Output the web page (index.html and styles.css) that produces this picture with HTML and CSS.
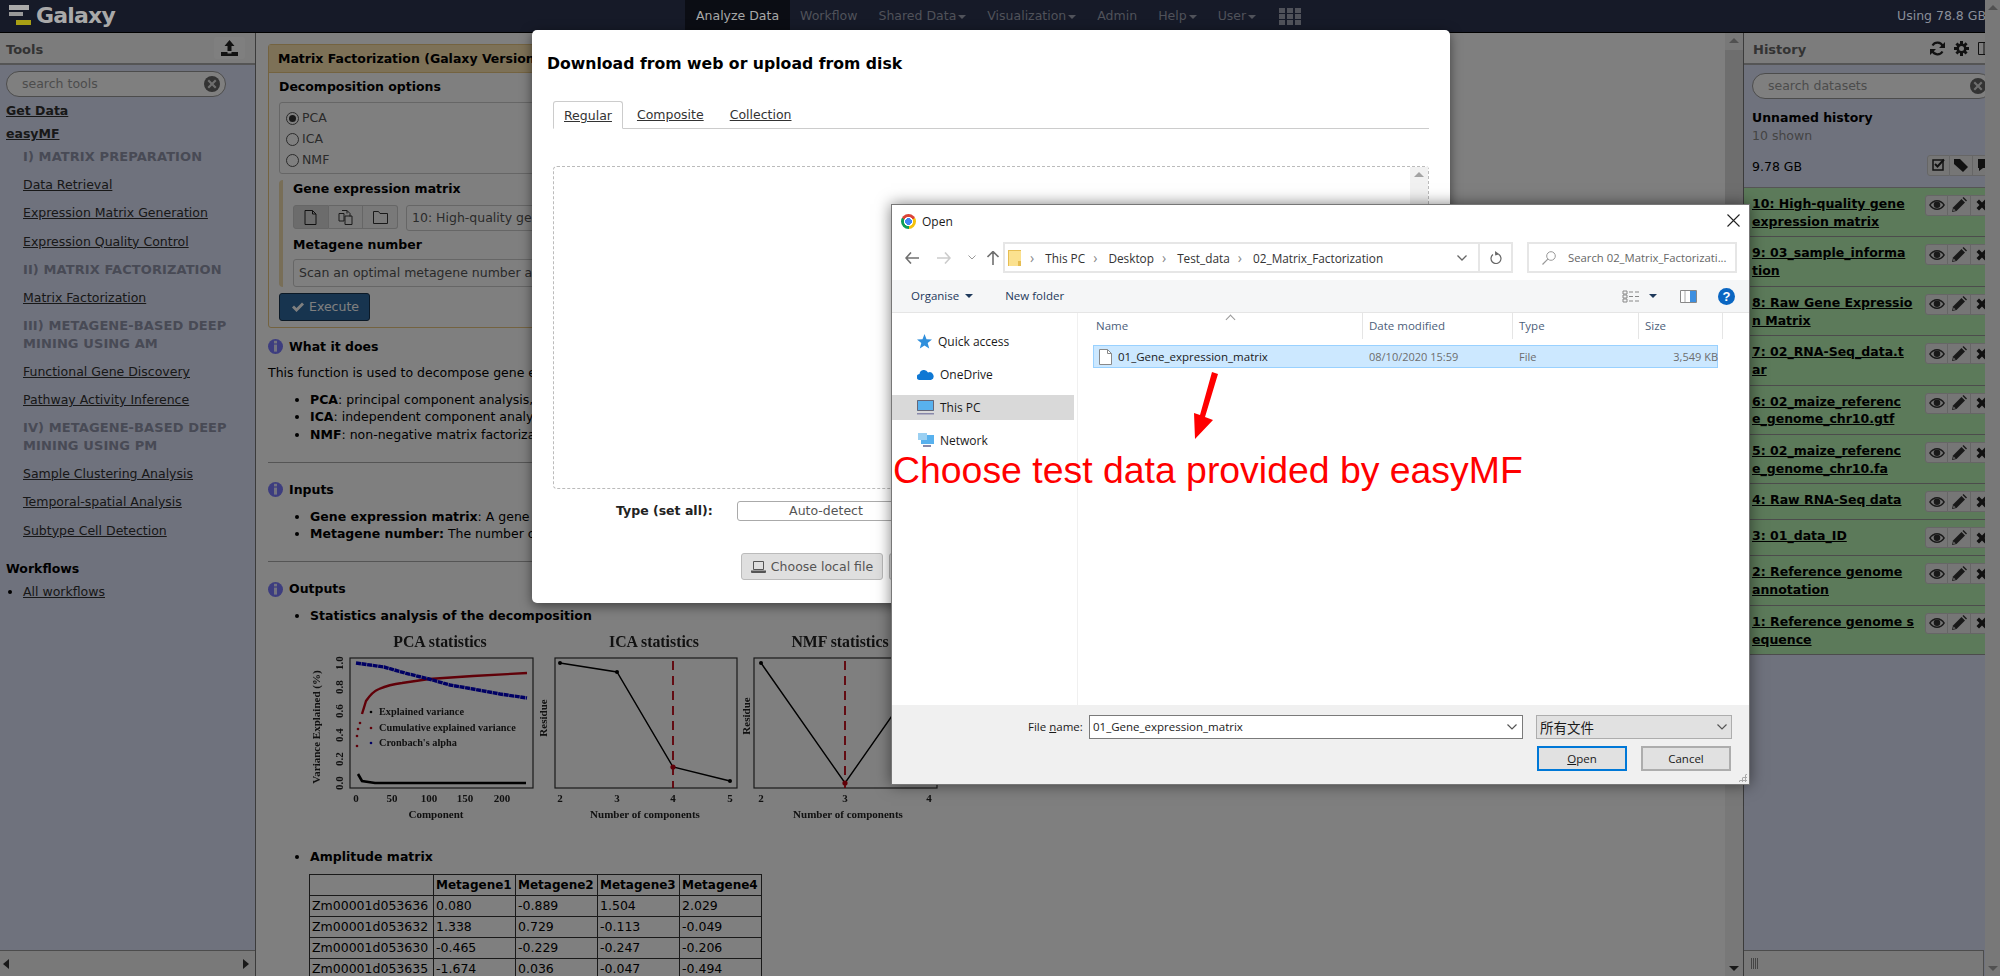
FILE: index.html
```html
<!DOCTYPE html>
<html lang="en">
<head>
    <meta charset="UTF-8">
    <title>Galaxy</title>
    <link rel="stylesheet" href="styles.css">
</head>
<body>
    <svg class="icon-defs" width="0" height="0">
        <symbol id="i-eye" viewBox="0 0 16 16"><path d="M0 8c2-3.500 5-5 8-5s6 1.500 8 5c-2 3.500-5 5-8 5s-6-1.500-8-5z" fill="#333"/><path d="M1.800 8C3.500 5.600 5.700 4.400 8 4.400s4.500 1.200 6.200 3.600c-1.700 2.400-3.900 3.600-6.200 3.600S3.500 10.400 1.800 8z" fill="#eee"/><circle cx="8" cy="7.800" r="3.300" fill="#333"/></symbol>
        <symbol id="i-pencil" viewBox="0 0 16 16"><path d="M1 15l1-4.500L10.500 2l3.500 3.500L5.500 14z" fill="#333"/><path d="M11.500 1l1-1 3.500 3.500-1 1z" fill="#333"/><path d="M2 14l.6-2.600 2 2z" fill="#ddd"/></symbol>
        <symbol id="i-x" viewBox="0 0 16 16"><path d="M2.500 5l2.500-2.500L8 5.500l3-3L13.500 5l-3 3 3 3-2.500 2.500-3-3-3 3L2.500 11l3-3z" fill="#222"/></symbol>
        <symbol id="i-info" viewBox="0 0 15 15"><circle cx="7.500" cy="7.500" r="7.500" fill="#7a7aff"/><rect x="6" y="1.800" width="3" height="2.600" fill="#e6e6ff"/><rect x="6" y="5.600" width="3" height="7" fill="#e6e6ff"/></symbol>
        <symbol id="i-clear" viewBox="0 0 16 16"><circle cx="8" cy="8" r="8" fill="#666"/><path d="M5 3.500L8 6.500l3-3L12.500 5l-3 3 3 3-1.500 1.500-3-3-3 3L3.500 11l3-3-3-3z" fill="#ddd"/></symbol>
    </svg>

    <div class="page">
        <header class="masthead">
            <div class="brand">
                <svg class="brand-logo" width="26" height="22" viewBox="0 0 26 22">
                    <rect x="0" y="0" width="20" height="5" fill="#aaa"/>
                    <rect x="0" y="7" width="14" height="4" fill="#999"/>
                    <rect x="7" y="15" width="15" height="5" fill="#a89f14"/>
                </svg>
                <span class="brand-name">Galaxy</span>
            </div>
            <nav class="top-nav">
                <a class="nav-item active">Analyze Data</a>
                <a class="nav-item">Workflow</a>
                <a class="nav-item caret">Shared Data</a>
                <a class="nav-item caret">Visualization</a>
                <a class="nav-item">Admin</a>
                <a class="nav-item caret">Help</a>
                <a class="nav-item caret">User</a>
                <span class="apps-grid"><i></i><i></i><i></i><i></i><i></i><i></i><i></i><i></i><i></i></span>
            </nav>
            <div class="quota">Using 78.8 GB</div>
        </header>

        <div class="panels">
            <aside class="side-panel tools-panel">
                <div class="panel-header">
                    <span class="panel-title">Tools</span>
                    <span class="upload-btn">
                        <svg width="17" height="16" viewBox="0 0 17 16"><path d="M8.500 0L13.500 6H10.500V11H6.500V6H3.500z" fill="#222"/><path d="M0 12h6.500v1.500h4V12H17v4H0z" fill="#222"/></svg>
                    </span>
                </div>
                <div class="panel-body">
                    <div class="search-box tools-search">
                        <span>search tools</span>
                        <svg class="clear-icon" width="16" height="16"><use href="#i-clear"/></svg>
                    </div>
                    <a class="tool-link top">Get Data</a>
                    <a class="tool-link top last">easyMF</a>
                    <div class="tool-label">I) MATRIX PREPARATION</div>
                    <a class="tool-link">Data Retrieval</a>
                    <a class="tool-link">Expression Matrix Generation</a>
                    <a class="tool-link">Expression Quality Control</a>
                    <div class="tool-label">II) MATRIX FACTORIZATION</div>
                    <a class="tool-link">Matrix Factorization</a>
                    <div class="tool-label">III) METAGENE-BASED DEEP MINING USING AM</div>
                    <a class="tool-link">Functional Gene Discovery</a>
                    <a class="tool-link">Pathway Activity Inference</a>
                    <div class="tool-label">IV) METAGENE-BASED DEEP MINING USING PM</div>
                    <a class="tool-link">Sample Clustering Analysis</a>
                    <a class="tool-link">Temporal-spatial Analysis</a>
                    <a class="tool-link">Subtype Cell Detection</a>
                    <div class="workflow-title">Workflows</div>
                    <ul class="workflow-list">
                        <li><a>All workflows</a></li>
                    </ul>
                </div>
                <div class="panel-footer hscroll">
                    <span class="arrow-left"></span>
                    <span class="arrow-right"></span>
                </div>
            </aside>

            <main class="center">
                <div class="center-content">
                    <section class="tool-card">
                        <div class="tool-card-head">Matrix Factorization (Galaxy Version 1.0.0)</div>
                        <div class="tool-card-body">
                            <div class="field-title">Decomposition options</div>
                            <div class="radio-box">
                                <div class="radio-row"><span class="radio checked"></span>PCA</div>
                                <div class="radio-row"><span class="radio"></span>ICA</div>
                                <div class="radio-row"><span class="radio"></span>NMF</div>
                            </div>
                            <div class="sub-section">
                                <div class="field-title">Gene expression matrix</div>
                                <div class="data-row">
                                    <div class="btn-group">
                                        <span class="seg active">
                                            <svg width="13" height="15" viewBox="0 0 13 15"><path d="M1 .500h7.500L12 4v10.500H1zM8.500 .500V4H12" fill="none" stroke="#222"/></svg>
                                        </span>
                                        <span class="seg">
                                            <svg width="15" height="15" viewBox="0 0 15 15"><path d="M1 3.500h5V11H1zM4 .500h5v3M9 .500l3 3v3M7 6h7v8.500H7z" fill="none" stroke="#333"/></svg>
                                        </span>
                                        <span class="seg">
                                            <svg width="15" height="13" viewBox="0 0 15 13"><path d="M.500 .500h5l1.500 2h7.500v10H.500z" fill="none" stroke="#333"/></svg>
                                        </span>
                                    </div>
                                    <div class="fake-select">10: High-quality gene expression matrix</div>
                                </div>
                                <div class="field-title second">Metagene number</div>
                                <div class="fake-input">Scan an optimal metagene number automatically</div>
                            </div>
                            <button class="execute-btn">
                                <svg width="12" height="10" viewBox="0 0 12 10"><path d="M0 5.500L2 3.500l2.500 2.500L10 .500l2 2L4.500 10z" fill="#fff"/></svg>
                                Execute
                            </button>
                        </div>
                    </section>

                    <h4 class="help-title first"><svg width="15" height="15"><use href="#i-info"/></svg>What it does</h4>
                    <p class="help-text">This function is used to decompose gene expression</p>
                    <ul class="help-list">
                        <li><b>PCA</b>: principal component analysis,</li>
                        <li><b>ICA</b>: independent component analysis</li>
                        <li><b>NMF</b>: non-negative matrix factorization</li>
                    </ul>
                    <hr class="help-rule">
                    <h4 class="help-title"><svg width="15" height="15"><use href="#i-info"/></svg>Inputs</h4>
                    <ul class="help-list">
                        <li><b>Gene expression matrix</b>: A gene</li>
                        <li><b>Metagene number:</b> The number of</li>
                    </ul>
                    <hr class="help-rule">
                    <h4 class="help-title"><svg width="15" height="15"><use href="#i-info"/></svg>Outputs</h4>
                    <ul class="help-list">
                        <li><b>Statistics analysis of the decomposition</b></li>
                    </ul>

                    <svg class="stats-chart" width="650" height="190" viewBox="300 632 650 190">
                        <g class="chart-title">
                            <text x="440" y="646" text-anchor="middle">PCA statistics</text>
                            <text x="654" y="646" text-anchor="middle">ICA statistics</text>
                            <text x="840" y="646" text-anchor="middle">NMF statistics</text>
                        </g>
                        <g fill="none" stroke="#333" stroke-width="1.200">
                            <rect x="350" y="657" width="183" height="130"/>
                            <rect x="555" y="657" width="182" height="130"/>
                            <rect x="754" y="657" width="183" height="130"/>
                        </g>
                        <!-- PCA curves -->
                        <path d="M358 773L362 780L375 782H526" fill="none" stroke="#000" stroke-width="2.600"/>
                        <path d="M362 713L366 700C370 694 374 690 379 688C386 685 394 683 402 682L429 678L473 675L527 672" fill="none" stroke="#c00010" stroke-width="2.400"/>
                        <g fill="#c00010"><circle cx="357" cy="745" r="1.300"/><circle cx="357" cy="735" r="1.300"/><circle cx="358" cy="728" r="1.300"/><circle cx="360" cy="722" r="1.300"/><circle cx="371" cy="727" r="1.300"/></g>
                        <path d="M356 662L384 666L405 672L429 678L450 684L473 688L500 693L527 697" fill="none" stroke="#0000c8" stroke-width="3.400" stroke-dasharray="5 .6"/>
                        <circle cx="371" cy="711" r="1.300" fill="#000"/>
                        <circle cx="371" cy="742" r="1.300" fill="#0000c8"/>
                        <g class="chart-legend">
                            <text x="379" y="714">Explained variance</text>
                            <text x="379" y="730">Cumulative explained variance</text>
                            <text x="379" y="745">Cronbach's alpha</text>
                        </g>
                        <g class="chart-axis">
                            <text transform="rotate(-90 343 662)" x="343" y="662" text-anchor="middle">1.0</text>
                            <text transform="rotate(-90 343 686)" x="343" y="686" text-anchor="middle">0.8</text>
                            <text transform="rotate(-90 343 710)" x="343" y="710" text-anchor="middle">0.6</text>
                            <text transform="rotate(-90 343 734)" x="343" y="734" text-anchor="middle">0.4</text>
                            <text transform="rotate(-90 343 758)" x="343" y="758" text-anchor="middle">0.2</text>
                            <text transform="rotate(-90 343 782)" x="343" y="782" text-anchor="middle">0.0</text>
                            <text x="356" y="801" text-anchor="middle">0</text>
                            <text x="392" y="801" text-anchor="middle">50</text>
                            <text x="429" y="801" text-anchor="middle">100</text>
                            <text x="465" y="801" text-anchor="middle">150</text>
                            <text x="502" y="801" text-anchor="middle">200</text>
                            <text x="436" y="817" text-anchor="middle">Component</text>
                            <text transform="rotate(-90 320 726)" x="320" y="726" text-anchor="middle">Variance Explained (%)</text>

                            <text x="560" y="801" text-anchor="middle">2</text>
                            <text x="617" y="801" text-anchor="middle">3</text>
                            <text x="673" y="801" text-anchor="middle">4</text>
                            <text x="730" y="801" text-anchor="middle">5</text>
                            <text x="645" y="817" text-anchor="middle">Number of components</text>
                            <text transform="rotate(-90 547 717)" x="547" y="717" text-anchor="middle">Residue</text>

                            <text x="761" y="801" text-anchor="middle">2</text>
                            <text x="845" y="801" text-anchor="middle">3</text>
                            <text x="929" y="801" text-anchor="middle">4</text>
                            <text x="848" y="817" text-anchor="middle">Number of components</text>
                            <text transform="rotate(-90 750 715)" x="750" y="715" text-anchor="middle">Residue</text>
                        </g>
                        <!-- ICA -->
                        <path d="M673 660V787" stroke="#c00010" stroke-width="1.800" stroke-dasharray="9 6"/>
                        <path d="M560 662L617 671L673 766L730 780" fill="none" stroke="#000" stroke-width="1.400"/>
                        <circle cx="560" cy="662" r="2" fill="#000"/><circle cx="617" cy="671" r="2" fill="#000"/><circle cx="673" cy="766" r="2.600" fill="#c00010"/><circle cx="730" cy="780" r="2" fill="#000"/>
                        <!-- NMF -->
                        <path d="M845 660V787" stroke="#c00010" stroke-width="1.800" stroke-dasharray="9 6"/>
                        <path d="M761 662L845 782L929 662" fill="none" stroke="#000" stroke-width="1.400"/>
                        <circle cx="761" cy="662" r="2" fill="#000"/><circle cx="845" cy="782" r="2.600" fill="#c00010"/>
                    </svg>

                    <ul class="help-list amplitude">
                        <li><b>Amplitude matrix</b></li>
                    </ul>
                    <table class="matrix">
                        <tr><th></th><th>Metagene1</th><th>Metagene2</th><th>Metagene3</th><th>Metagene4</th></tr>
                        <tr><td>Zm00001d053636</td><td>0.080</td><td>-0.889</td><td>1.504</td><td>2.029</td></tr>
                        <tr><td>Zm00001d053632</td><td>1.338</td><td>0.729</td><td>-0.113</td><td>-0.049</td></tr>
                        <tr><td>Zm00001d053630</td><td>-0.465</td><td>-0.229</td><td>-0.247</td><td>-0.206</td></tr>
                        <tr><td>Zm00001d053635</td><td>-1.674</td><td>0.036</td><td>-0.047</td><td>-0.494</td></tr>
                    </table>
                </div>
                <div class="vscroll center-scroll">
                    <span class="arrow-up"></span>
                    <span class="thumb"></span>
                    <span class="arrow-down"></span>
                </div>
            </main>

            <aside class="side-panel history-panel">
                <div class="panel-header">
                    <span class="panel-title">History</span>
                    <span class="history-tools">
                        <svg width="15" height="15" viewBox="0 0 15 15"><path d="M12.800 5.200A5.800 5.800 0 0 0 2.500 4.500M2.200 9.800A5.800 5.800 0 0 0 12.500 10.500" fill="none" stroke="#222" stroke-width="2.200"/><path d="M15 1v6H9zM0 14V8h6z" fill="#222"/></svg>
                        <svg width="15" height="15" viewBox="0 0 15 15"><circle cx="7.500" cy="7.500" r="3.800" fill="none" stroke="#222" stroke-width="2.600"/><path d="M6 0h3v3H6zM6 12h3v3H6zM0 6h3v3H0zM12 6h3v3h-3zM1.400 3.500L3.500 1.400l2 2-2.100 2.100zM9.500 11.600l2.100-2.100 2 2-2.100 2.100zM1.400 11.500l2.100-2.100 2 2-2.100 2.100zM9.500 3.400l2.100-2.100 2 2-2.100 2.100z" fill="#222"/></svg>
                        <svg width="15" height="15" viewBox="0 0 15 15"><path d="M.500 1.500h14v12H.500zM6 1.500v12" fill="none" stroke="#222"/></svg>
                    </span>
                </div>
                <div class="panel-body">
                    <div class="search-box history-search">
                        <span>search datasets</span>
                        <svg class="clear-icon" width="16" height="16"><use href="#i-clear"/></svg>
                    </div>
                    <div class="history-name">Unnamed history</div>
                    <div class="history-shown">10 shown</div>
                    <div class="history-size">
                        <span class="size-value-text">9.78 GB</span>
                        <span class="size-actions">
                            <span class="mini-btn"><svg width="14" height="14" viewBox="0 0 14 14"><path d="M1 2h10v10H1z" fill="none" stroke="#222" stroke-width="1.500"/><path d="M3 6l2.500 2.500L12 1.500" fill="none" stroke="#222" stroke-width="2"/></svg></span>
                            <span class="mini-btn"><svg width="15" height="15" viewBox="0 0 15 15"><path d="M0 1h6l8 8-5 5-9-8z" fill="#222"/></svg></span>
                            <span class="mini-btn"><svg width="15" height="14" viewBox="0 0 15 14"><path d="M1 1h13v9H6l-4 3v-3H1z" fill="#222"/></svg></span>
                        </span>
                    </div>
                    <div class="dataset-list">
                        <div class="dataset"><a class="dataset-name">10: High-quality gene<br>expression matrix</a><span class="dataset-actions"><span class="mini-btn"><svg width="16" height="16"><use href="#i-eye"/></svg></span><span class="mini-btn"><svg width="16" height="16"><use href="#i-pencil"/></svg></span><span class="mini-btn"><svg width="16" height="16"><use href="#i-x"/></svg></span></span></div>
                        <div class="dataset"><a class="dataset-name">9: 03_sample_informa<br>tion</a><span class="dataset-actions"><span class="mini-btn"><svg width="16" height="16"><use href="#i-eye"/></svg></span><span class="mini-btn"><svg width="16" height="16"><use href="#i-pencil"/></svg></span><span class="mini-btn"><svg width="16" height="16"><use href="#i-x"/></svg></span></span></div>
                        <div class="dataset"><a class="dataset-name">8: Raw Gene Expressio<br>n Matrix</a><span class="dataset-actions"><span class="mini-btn"><svg width="16" height="16"><use href="#i-eye"/></svg></span><span class="mini-btn"><svg width="16" height="16"><use href="#i-pencil"/></svg></span><span class="mini-btn"><svg width="16" height="16"><use href="#i-x"/></svg></span></span></div>
                        <div class="dataset"><a class="dataset-name">7: 02_RNA-Seq_data.t<br>ar</a><span class="dataset-actions"><span class="mini-btn"><svg width="16" height="16"><use href="#i-eye"/></svg></span><span class="mini-btn"><svg width="16" height="16"><use href="#i-pencil"/></svg></span><span class="mini-btn"><svg width="16" height="16"><use href="#i-x"/></svg></span></span></div>
                        <div class="dataset"><a class="dataset-name">6: 02_maize_referenc<br>e_genome_chr10.gtf</a><span class="dataset-actions"><span class="mini-btn"><svg width="16" height="16"><use href="#i-eye"/></svg></span><span class="mini-btn"><svg width="16" height="16"><use href="#i-pencil"/></svg></span><span class="mini-btn"><svg width="16" height="16"><use href="#i-x"/></svg></span></span></div>
                        <div class="dataset"><a class="dataset-name">5: 02_maize_referenc<br>e_genome_chr10.fa</a><span class="dataset-actions"><span class="mini-btn"><svg width="16" height="16"><use href="#i-eye"/></svg></span><span class="mini-btn"><svg width="16" height="16"><use href="#i-pencil"/></svg></span><span class="mini-btn"><svg width="16" height="16"><use href="#i-x"/></svg></span></span></div>
                        <div class="dataset"><a class="dataset-name">4: Raw RNA-Seq data</a><span class="dataset-actions"><span class="mini-btn"><svg width="16" height="16"><use href="#i-eye"/></svg></span><span class="mini-btn"><svg width="16" height="16"><use href="#i-pencil"/></svg></span><span class="mini-btn"><svg width="16" height="16"><use href="#i-x"/></svg></span></span></div>
                        <div class="dataset"><a class="dataset-name">3: 01_data_ID</a><span class="dataset-actions"><span class="mini-btn"><svg width="16" height="16"><use href="#i-eye"/></svg></span><span class="mini-btn"><svg width="16" height="16"><use href="#i-pencil"/></svg></span><span class="mini-btn"><svg width="16" height="16"><use href="#i-x"/></svg></span></span></div>
                        <div class="dataset"><a class="dataset-name">2: Reference genome<br>annotation</a><span class="dataset-actions"><span class="mini-btn"><svg width="16" height="16"><use href="#i-eye"/></svg></span><span class="mini-btn"><svg width="16" height="16"><use href="#i-pencil"/></svg></span><span class="mini-btn"><svg width="16" height="16"><use href="#i-x"/></svg></span></span></div>
                        <div class="dataset"><a class="dataset-name">1: Reference genome s<br>equence</a><span class="dataset-actions"><span class="mini-btn"><svg width="16" height="16"><use href="#i-eye"/></svg></span><span class="mini-btn"><svg width="16" height="16"><use href="#i-pencil"/></svg></span><span class="mini-btn"><svg width="16" height="16"><use href="#i-x"/></svg></span></span></div>
                    </div>
                </div>
                <div class="panel-footer grip-footer">
                    <span class="grip"></span>
                </div>
            </aside>
        </div>
    </div>

    <div class="vscroll page-scroll">
        <span class="arrow-up"></span>
        <span class="arrow-down"></span>
    </div>

    <div class="backdrop"></div>

    <!-- upload modal -->
    <div class="upload-modal">
        <div class="upload-title">Download from web or upload from disk</div>
        <div class="upload-tabs">
            <a class="upload-tab active">Regular</a>
            <a class="upload-tab">Composite</a>
            <a class="upload-tab">Collection</a>
        </div>
        <div class="drop-zone">
            <div class="vscroll drop-scroll">
                <span class="arrow-up"></span>
            </div>
        </div>
        <div class="type-row">
            <span class="type-label">Type (set all):</span>
            <span class="type-select">Auto-detect</span>
        </div>
        <div class="upload-buttons">
            <button class="upload-btn-local">
                <svg width="15" height="12" viewBox="0 0 15 12"><path d="M2.500 .500h10v8h-10z" fill="none" stroke="#555"/><path d="M0 9.500h15V11a1 1 0 0 1-1 1H1a1 1 0 0 1-1-1z" fill="#555"/></svg>
                Choose local file
            </button>
            <button class="upload-btn-local"></button>
        </div>
    </div>

    <!-- windows file dialog -->
    <div class="open-dialog">
        <div class="od-title">
            <span class="chrome-icon"></span>
            <span>Open</span>
            <svg class="od-close" width="13" height="13" viewBox="0 0 13 13"><path d="M.500 .500l12 12M12.500 .500l-12 12" stroke="#222" stroke-width="1.100"/></svg>
        </div>
        <div class="od-address-row">
            <div class="od-nav-arrows">
                <svg width="14" height="12" viewBox="0 0 14 12"><path d="M6 .500L1 6l5 5.500M1 6h13" fill="none" stroke="#707070" stroke-width="1.600"/></svg>
                <svg width="14" height="12" viewBox="0 0 14 12"><path d="M8 .500L13 6l-5 5.500M13 6H0" fill="none" stroke="#ccc" stroke-width="1.600"/></svg>
                <svg width="8" height="5" viewBox="0 0 8 5"><path d="M.500 .500L4 4l3.500-3.500" fill="none" stroke="#999"/></svg>
                <svg width="12" height="14" viewBox="0 0 12 14"><path d="M.500 6L6 .500 11.500 6M6 1v13" fill="none" stroke="#707070" stroke-width="1.600"/></svg>
            </div>
            <div class="od-address">
                <svg class="folder-icon" width="13" height="16" viewBox="0 0 13 16"><path d="M0 0h13v16H0z" fill="#fbe18f"/><path d="M0 0h13v1H0zM0 0h1v16H0zM10 11h3v5h-3z" fill="#e6bd52"/></svg>
                <span class="crumb-sep">›</span><span>This PC</span>
                <span class="crumb-sep">›</span><span>Desktop</span>
                <span class="crumb-sep">›</span><span>Test_data</span>
                <span class="crumb-sep">›</span><span>02_Matrix_Factorization</span>
                <svg class="address-chevron" width="10" height="6" viewBox="0 0 10 6"><path d="M.500 .500L5 5 9.500 .500" fill="none" stroke="#666" stroke-width="1.300"/></svg>
                <span class="address-refresh">
                    <svg width="12" height="13" viewBox="0 0 12 13"><path d="M8.500 3.200A5 5 0 1 1 3 3.500" fill="none" stroke="#666" stroke-width="1.200"/><path d="M5 0l.2 4.600L9.500 3.200z" fill="#666"/></svg>
                </span>
            </div>
            <div class="od-search">
                <svg width="14" height="14" viewBox="0 0 14 14"><circle cx="9" cy="5" r="4.300" fill="none" stroke="#999"/><path d="M5.800 8.200L.500 13.500" stroke="#999" stroke-width="1.200"/></svg>
                <span>Search 02_Matrix_Factorizati...</span>
            </div>
        </div>
        <div class="od-toolbar">
            <span class="od-tool caret-dark">Organise</span>
            <span class="od-tool">New folder</span>
            <span class="od-tool-right">
                <svg width="18" height="13" viewBox="0 0 18 13"><path d="M1 1h4v3H1zM1 5h4v3H1zM1 9h4v3H1z" fill="none" stroke="#888"/><path d="M7 2h4M13 2h4M7 6.500h4M13 6.500h4M7 11h4M13 11h4" stroke="#888"/></svg>
                <span class="view-caret"></span>
                <svg class="pane-icon" width="17" height="13" viewBox="0 0 17 13"><path d="M.500 .500h16v12H.500z" fill="#fff" stroke="#888"/><path d="M10 1h6v11h-6z" fill="#3d8fe0"/><path d="M5 1v11" stroke="#aaa"/></svg>
                <svg class="help-icon" width="17" height="17" viewBox="0 0 17 17"><circle cx="8.500" cy="8.500" r="8.500" fill="#0a66c2"/><text class="help-q" x="8.500" y="13" text-anchor="middle">?</text></svg>
            </span>
        </div>
        <div class="od-main">
            <div class="od-nav">
                <div class="od-nav-item">
                    <svg width="15" height="15" viewBox="0 0 15 15"><path d="M7.500 0l2 5.200 5.500.3-4.300 3.500 1.500 5.500-4.700-3-4.700 3 1.500-5.500L0 5.500l5.500-.3z" fill="#2f8fdc"/></svg>
                    Quick access
                </div>
                <div class="od-nav-item">
                    <svg width="17" height="11" viewBox="0 0 17 11"><path d="M3 11a3 3 0 0 1-.5-6A4.500 4.500 0 0 1 11 3.500 3.800 3.800 0 0 1 14 11z" fill="#0f78d4"/></svg>
                    OneDrive
                </div>
                <div class="od-nav-item selected">
                    <svg width="17" height="15" viewBox="0 0 17 15"><path d="M0 0h17v11H0z" fill="#58b1ee"/><path d="M.500 .500h16v10H.500z" fill="none" stroke="#667"/><path d="M0 13h17v1.500H0z" fill="#88a"/></svg>
                    This PC
                </div>
                <div class="od-nav-item">
                    <svg width="17" height="15" viewBox="0 0 17 15"><path d="M4 2h13v9H4z" fill="#58b1ee"/><path d="M1 0h9v7H1z" fill="#9bd0f2"/><path d="M6 12h8v2H6z" fill="#88a"/></svg>
                    Network
                </div>
            </div>
            <div class="od-list">
                <div class="od-list-head">
                    <span class="sort-mark"></span>
                    <span class="col col-name">Name</span>
                    <span class="col col-date">Date modified</span>
                    <span class="col col-type">Type</span>
                    <span class="col col-size">Size</span>
                </div>
                <div class="od-file">
                    <span class="col col-name file-name">
                        <svg width="13" height="16" viewBox="0 0 13 16"><path d="M.500 .500h8l4 4v11H.500z" fill="#fff" stroke="#888"/><path d="M8.500 .500v4h4" fill="none" stroke="#888"/></svg>
                        01_Gene_expression_matrix
                    </span>
                    <span class="col col-date">08/10/2020 15:59</span>
                    <span class="col col-type">File</span>
                    <span class="col col-size size-value">3,549 KB</span>
                </div>
            </div>
        </div>
        <div class="od-bottom">
            <div class="od-file-row">
                <span class="od-label">File <u>n</u>ame:</span>
                <div class="od-input">
                    <span>01_Gene_expression_matrix</span>
                    <svg width="10" height="6" viewBox="0 0 10 6"><path d="M.500 .500L5 5 9.500 .500" fill="none" stroke="#555" stroke-width="1.200"/></svg>
                </div>
                <div class="od-filter">
                    <span>所有文件</span>
                    <svg width="10" height="6" viewBox="0 0 10 6"><path d="M.500 .500L5 5 9.500 .500" fill="none" stroke="#555" stroke-width="1.200"/></svg>
                </div>
            </div>
            <div class="od-button-row">
                <button class="od-btn primary"><u>O</u>pen</button>
                <button class="od-btn">Cancel</button>
            </div>
            <span class="resize-grip"></span>
        </div>
        <!-- annotation added on the screenshot -->
        <svg class="red-arrow" width="24" height="68" viewBox="0 0 24 68"><path d="M20 0L26 2 13 45 21 48 3 67 2 41 8 43z" fill="#ff0000"/></svg>
        <div class="red-note">Choose test data provided by easyMF</div>
    </div>
</body>
</html>
```
FILE: styles.css
```css
* {
    margin: 0;
    padding: 0;
    box-sizing: border-box;
}

html, body {
    height: 976px;
    overflow: hidden;
}

body {
    display: flex;
    font-family: 'DejaVu Sans', Verdana, sans-serif;
    font-size: 12.500px;
    line-height: 17.6px;
    color: #000;
    background: #fff;
    position: relative;
}

.icon-defs {
    position: absolute;
}

.page {
    width: 1985px;
    height: 976px;
    display: flex;
    flex-direction: column;
}

/* masthead, above the backdrop because it keeps its brightness */
.masthead {
    position: relative;
    z-index: 2;
    height: 33px;
    flex: none;
    background: #161a28;
    border-bottom: 1px solid #000;
    display: flex;
    align-items: center;
    overflow: hidden;
}

.brand {
    width: 685px;
    display: flex;
    align-items: center;
    flex: none;
    padding-left: 9px;
}

.brand-logo {
    margin-right: 1px;
}

.brand-name {
    font-size: 22px;
    font-weight: bold;
    color: #a9a9a9;
    letter-spacing: -.8px;
}

.top-nav {
    display: flex;
    align-items: center;
    height: 32px;
    flex: 1;
}

.nav-item {
    color: #50525a;
    margin-right: 21px;
    line-height: 32px;
}

.nav-item.active {
    background: #0b0d14;
    color: #a8a8a8;
    padding: 0 11px;
    margin-right: 10px;
}

.nav-item.caret::after {
    content: "";
    display: inline-block;
    margin-left: 2px;
    vertical-align: 1px;
    border-left: 4px solid transparent;
    border-right: 4px solid transparent;
    border-top: 4px solid #50525a;
}

.apps-grid {
    display: grid;
    grid-template-columns: repeat(3, 6px);
    grid-auto-rows: 5px;
    gap: 1px 2px;
    margin-left: 2px;
}

.apps-grid i {
    background: #50525a;
}

.quota {
    color: #8a8f9a;
    white-space: nowrap;
    width: 88px;
    flex: none;
}

.panels {
    flex: 1;
    display: flex;
    min-height: 0;
}

.side-panel {
    background: #dfe5fb;
    display: flex;
    flex-direction: column;
    flex: none;
    overflow: hidden;
}

.tools-panel {
    width: 256px;
    border-right: 1px solid #777;
}

.history-panel {
    width: 242px;
    border-left: 1px solid #777;
}

.panel-header {
    height: 32px;
    flex: none;
    background: #f8f8f8;
    border-bottom: 2px solid #aaa;
    display: flex;
    align-items: center;
    justify-content: space-between;
}

.panel-title {
    color: #666;
    font-size: 13px;
    font-weight: bold;
    padding: 3px 0 0 6px;
}

.history-panel .panel-title {
    padding-left: 9px;
}

.upload-btn {
    width: 31px;
    height: 22px;
    margin-right: 10px;
    display: flex;
    align-items: center;
    justify-content: center;
    background: #fff;
    border-radius: 3px;
}

.panel-body {
    flex: 1;
    min-height: 0;
}

.panel-footer {
    height: 26px;
    flex: none;
    background: #f2f2f2;
    border-top: 1px solid #999;
}

.hscroll {
    display: flex;
    align-items: center;
    justify-content: space-between;
    padding: 0 6px 0 3px;
}

.arrow-left {
    border-top: 5px solid transparent;
    border-bottom: 5px solid transparent;
    border-right: 6px solid #333;
}

.arrow-right {
    border-top: 5px solid transparent;
    border-bottom: 5px solid transparent;
    border-left: 6px solid #333;
}

.search-box {
    height: 26px;
    border: 1px solid #999;
    border-radius: 13px;
    background: #fff;
    color: #999;
    display: flex;
    align-items: center;
    justify-content: space-between;
    padding: 0 5px 0 15px;
}

.tools-search {
    width: 220px;
    margin: 6px 0 5px 6px;
}

.history-search {
    width: 240px;
    margin: 8px 0 10px 8px;
    flex: none;
}

.tool-link {
    display: block;
    color: #303030;
    text-decoration: underline;
    padding: 5.300px 10px 5.300px 23px;
}

.tool-link.top {
    font-weight: bold;
    padding: 0 0 5.600px 6px;
}

.tool-link.top.last {
    padding-bottom: 0;
}

.tool-label {
    color: #9094aa;
    font-size: 13px;
    letter-spacing: .1px;
    font-weight: bold;
    padding: 5.300px 0 5.300px 23px;
}

.workflow-title {
    font-weight: bold;
    padding-left: 6px;
    margin-top: 16px;
}

.workflow-list {
    margin-top: 5px;
    padding-left: 23px;
}

.workflow-list a {
    color: #303030;
    text-decoration: underline;
}

/* center column */
.center {
    flex: 1;
    min-width: 0;
    display: flex;
    background: #fff;
}

.center-content {
    flex: 1;
    min-width: 0;
    padding: 11px 9px 0 12px;
    overflow: hidden;
}

.vscroll {
    background: #f1f1f1;
    position: relative;
    display: flex;
    flex-direction: column;
    align-items: center;
    justify-content: space-between;
}

.center-scroll {
    width: 18px;
    flex: none;
}

.thumb {
    position: absolute;
    top: 17px;
    left: 0;
    right: 0;
    height: 640px;
    background: #dcdcdc;
}

.arrow-up {
    margin-top: 5px;
    border-left: 5px solid transparent;
    border-right: 5px solid transparent;
    border-bottom: 5px solid #a3a3a3;
}

.arrow-down {
    margin-bottom: 5px;
    border-left: 5px solid transparent;
    border-right: 5px solid transparent;
    border-top: 5px solid #333;
}

.page-scroll {
    width: 15px;
    height: 976px;
    flex: none;
}

.page-scroll .arrow-down {
    border-top-color: #a3a3a3;
}

.tool-card {
    width: 1100px;
    border: 1px solid #e8c680;
    border-radius: 3px;
}

.tool-card-head {
    height: 28px;
    background: #fbe2ae;
    border-bottom: 1px solid #e8c680;
    font-weight: bold;
    line-height: 27px;
    padding-left: 9px;
}

.tool-card-body {
    padding: 5px 10px 6px 10px;
}

.field-title {
    font-weight: bold;
}

.field-title.second {
    margin-top: 5px;
    margin-bottom: 5px;
}

.radio-box {
    height: 72px;
    margin-top: 6px;
    border: 1px solid #ccc;
    border-radius: 3px;
    padding: 5px 0 0 6px;
}

.radio-row {
    height: 21px;
    display: flex;
    align-items: center;
    color: #555;
}

.radio {
    width: 13px;
    height: 13px;
    border: 1px solid #555;
    border-radius: 50%;
    margin-right: 3px;
    background: #fff;
    position: relative;
}

.radio.checked::after {
    content: "";
    position: absolute;
    left: 2px;
    top: 2px;
    width: 7px;
    height: 7px;
    border-radius: 50%;
    background: #333;
}

.sub-section {
    margin-top: 6px;
    border-left: 4px solid #f0dcae;
    border-radius: 4px 0 0 4px;
    padding: 0 0 0 10px;
    height: 107px;
}

.data-row {
    display: flex;
    gap: 8px;
    margin-top: 8px;
    height: 26px;
}

.btn-group {
    display: flex;
    width: 105px;
    height: 24px;
    flex: none;
}

.seg {
    flex: 1;
    display: flex;
    align-items: center;
    justify-content: center;
    background: #f2f2f2;
    border: 1px solid #ccc;
    border-left: 0;
}

.seg:first-child {
    border-left: 1px solid #ccc;
    border-radius: 3px 0 0 3px;
}

.seg:last-child {
    border-radius: 0 3px 3px 0;
}

.seg.active {
    background: #d9d9d9;
}

.fake-select, .fake-input {
    flex: 1;
    border: 1px solid #ccc;
    border-radius: 3px;
    color: #555;
    padding: 0 5px;
    line-height: 24px;
    background: #fff;
}

.fake-input {
    height: 28px;
    line-height: 26px;
}

.execute-btn {
    display: flex;
    align-items: center;
    gap: 5px;
    width: 91px;
    height: 28px;
    margin-top: 6px;
    padding-left: 12px;
    background: #2e689e;
    border: 1px solid #17324c;
    border-radius: 3px;
    color: #fff;
    font-family: inherit;
    font-size: 12.500px;
}

.help-title {
    display: flex;
    align-items: center;
    gap: 6px;
    font-size: 12.500px;
    margin-top: 18.500px;
}

.help-title.first {
    margin-top: 10px;
}

.help-text {
    margin-top: 9px;
    white-space: nowrap;
}

.help-list {
    margin-top: 9px;
    padding-left: 42px;
}

.help-rule {
    width: 1100px;
    border: 0;
    border-top: 1px solid #aaa;
    margin-top: 18px;
}

.stats-chart {
    display: block;
    margin: 8px 0 0 32px;
    filter: blur(.35px);
}

.chart-title text {
    font-family: 'Liberation Serif', serif;
    font-weight: bold;
    font-size: 15.800px;
    fill: #222;
}

.chart-legend text {
    font-family: 'Liberation Serif', serif;
    font-weight: bold;
    font-size: 10.300px;
    fill: #222;
}

.chart-axis text {
    font-family: 'Liberation Serif', serif;
    font-weight: bold;
    font-size: 11px;
    fill: #222;
}

.help-list.amplitude {
    margin-top: 25px;
}

.matrix {
    margin: 9px 0 0 41px;
    border-collapse: collapse;
    table-layout: fixed;
    width: 453px;
}

.matrix th, .matrix td {
    border: 1px solid #333;
    height: 21px;
    padding: 0 2px;
    text-align: left;
    line-height: 18px;
    white-space: nowrap;
    overflow: hidden;
}

.matrix th {
    font-size: 12px;
}

.matrix th:first-child {
    width: 124px;
}

/* history */
.history-tools {
    display: flex;
    gap: 9px;
    margin-right: -8px;
}

.history-name {
    font-weight: bold;
    padding-left: 8px;
}

.history-shown {
    color: #888;
    padding-left: 8px;
}

.history-size {
    display: flex;
    justify-content: space-between;
    align-items: center;
    padding-left: 8px;
    height: 22px;
    margin-top: 10px;
    width: 260px;
}

.size-value-text {
    padding-top: 3px;
}

.size-actions {
    display: flex;
    width: 77px;
}

.mini-btn {
    width: 23px;
    height: 21px;
    flex: none;
    display: flex;
    align-items: center;
    justify-content: center;
    background: #ececec;
    border: 1px solid #ccc;
    border-left: 0;
}

.mini-btn:first-child {
    border-left: 1px solid #ccc;
    border-radius: 3px 0 0 3px;
}

.dataset-list {
    margin-top: 10.800px;
    border-top: 1px solid #aaa;
}

.dataset {
    display: flex;
    justify-content: space-between;
    width: 260px;
    background: #b9f4b4;
    border-bottom: 1px solid #999;
    padding: 7px 0 6px 8px;
    min-height: 36px;
}

.dataset-name {
    font-weight: bold;
    line-height: 17.700px;
    text-decoration: underline;
    white-space: nowrap;
    color: #000;
}

.dataset-actions {
    display: flex;
    width: 79px;
    flex: none;
    height: 21px;
}

.grip-footer {
    display: flex;
    align-items: center;
    padding-left: 7px;
    border-right: 1px solid #999;
    width: 240px;
}

.grip {
    width: 8px;
    height: 11px;
    background: repeating-linear-gradient(to right, #888 0 1px, transparent 1px 2px);
}

/* dim layer under both windows */
.backdrop {
    position: absolute;
    inset: 0;
    z-index: 1;
    background: rgba(0, 0, 0, .5);
}

.upload-modal {
    position: absolute;
    z-index: 3;
    left: 532px;
    top: 30px;
    width: 918px;
    height: 573px;
    background: #fff;
    border-radius: 5px;
    box-shadow: 0 3px 12px rgba(0, 0, 0, .5);
    padding: 0 21px;
}

.upload-title {
    font-size: 15.700px;
    font-weight: bold;
    line-height: 20px;
    margin: 24px 0 0 -6px;
}

.upload-tabs {
    display: flex;
    margin-top: 27px;
    height: 28px;
    border-bottom: 1px solid #ccc;
}

.upload-tab {
    color: #333;
    text-decoration: underline;
    padding: 5px 13px;
    height: 28px;
}

.upload-tab.active {
    padding: 5px 10px;
    margin-right: 1px;
    border: 1px solid #ccc;
    border-bottom: 1px solid #fff;
    border-radius: 3px 3px 0 0;
    background: #fff;
}

.drop-zone {
    margin-top: 37px;
    height: 323px;
    border: 1px dashed #bbb;
    border-radius: 4px;
    display: flex;
    justify-content: flex-end;
}

.drop-scroll {
    width: 18px;
    height: 100%;
}

.type-row {
    display: flex;
    align-items: center;
    height: 20px;
    margin-top: 12px;
    padding-left: 63px;
}

.type-label {
    font-weight: bold;
    color: #222;
    width: 121px;
    white-space: nowrap;
}

.type-select {
    width: 178px;
    height: 20px;
    border: 1px solid #aaa;
    border-radius: 3px;
    text-align: center;
    line-height: 18px;
    color: #555;
}

.upload-buttons {
    display: flex;
    gap: 6px;
    margin-top: 32px;
    padding-left: 188px;
}

.upload-btn-local {
    width: 142px;
    height: 27px;
    display: flex;
    align-items: center;
    justify-content: center;
    gap: 5px;
    background: #dfdfdf;
    border: 1px solid #bbb;
    border-radius: 3px;
    color: #555;
    font-family: inherit;
    font-size: 12.500px;
}

/* file dialog */
.open-dialog {
    position: absolute;
    z-index: 4;
    left: 891px;
    top: 204px;
    width: 859px;
    height: 581px;
    background: #fff;
    border: 1px solid #777;
    box-shadow: 0 0 14px rgba(0, 0, 0, .5);
    display: flex;
    flex-direction: column;
    font-family: 'Open Sans', sans-serif;
    font-size: 11.500px;
    line-height: 16px;
    color: #1a1a1a;
}

.od-title {
    height: 33px;
    flex: none;
    display: flex;
    align-items: center;
    gap: 6px;
    padding-left: 9px;
    position: relative;
    font-size: 12px;
}

.chrome-icon {
    width: 15px;
    height: 15px;
    border-radius: 50%;
    background:
        radial-gradient(circle, #4285f4 0 3.200px, #fff 3.400px 4.400px, transparent 4.600px),
        conic-gradient(#db4437 0 60deg, #f4c20d 60deg 180deg, #0f9d58 180deg 300deg, #db4437 300deg);
}

.od-close {
    position: absolute;
    right: 9px;
    top: 9px;
}

.od-address-row {
    height: 42px;
    flex: none;
    padding-top: 4px;
    display: flex;
    align-items: flex-start;
}

.od-nav-arrows {
    width: 111px;
    height: 31px;
    flex: none;
    display: flex;
    align-items: center;
    gap: 18px;
    padding-left: 13px;
}

.od-nav-arrows svg:nth-child(3) {
    margin-left: -1px;
    margin-right: -7px;
}

.od-address {
    width: 510px;
    height: 31px;
    flex: none;
    border: 2px solid #e6e6e6;
    display: flex;
    align-items: center;
    padding-left: 3px;
    color: #333;
    font-size: 11.800px;
}

.folder-icon {
    margin-right: 1px;
}

.crumb-sep {
    color: #888;
    font-size: 14px;
    margin: 0 11px 0 8px;
}

.address-chevron {
    margin-left: auto;
    margin-right: 11px;
}

.address-refresh {
    width: 33px;
    height: 27px;
    border-left: 2px solid #e6e6e6;
    display: flex;
    align-items: center;
    justify-content: center;
}

.od-search {
    width: 210px;
    height: 31px;
    flex: none;
    margin-left: 14px;
    border: 2px solid #e6e6e6;
    display: flex;
    align-items: center;
    gap: 12px;
    padding-left: 13px;
    color: #666;
    white-space: nowrap;
    overflow: hidden;
    font-size: 11.300px;
}

.od-toolbar {
    height: 33px;
    flex: none;
    background: #f5f6f7;
    border-bottom: 1px solid #e5e5e5;
    display: flex;
    align-items: center;
    padding-left: 19px;
}

.od-tool {
    color: #1e395b;
    margin-right: 32px;
}

.caret-dark::after {
    content: "";
    display: inline-block;
    margin-left: 6px;
    vertical-align: 2px;
    border-left: 4px solid transparent;
    border-right: 4px solid transparent;
    border-top: 4px solid #1e395b;
}

.od-tool-right {
    margin-left: auto;
    display: flex;
    align-items: center;
    padding-right: 14px;
}

.view-caret {
    margin-left: 9px;
    border-left: 4px solid transparent;
    border-right: 4px solid transparent;
    border-top: 4px solid #1e395b;
}

.pane-icon {
    margin-left: 23px;
}

.help-icon {
    margin-left: 21px;
}

.help-q {
    font-family: 'Liberation Sans', sans-serif;
    font-size: 13px;
    font-weight: bold;
    fill: #fff;
}

.od-main {
    flex: 1;
    min-height: 0;
    display: flex;
}

.od-nav {
    width: 186px;
    flex: none;
    border-right: 1px solid #f0f0f0;
    padding-top: 16px;
}

.od-nav-item {
    height: 25px;
    width: 182px;
    margin-bottom: 8px;
    display: flex;
    align-items: center;
    gap: 6px;
    padding-left: 25px;
    font-size: 12px;
}

.od-nav-item.selected {
    background: #d9d9d9;
}

.od-list {
    flex: 1;
    min-width: 0;
    padding-left: 15px;
    position: relative;
}

.od-list-head {
    display: flex;
    height: 26px;
    color: #4c607a;
    align-items: center;
}

.sort-mark {
    position: absolute;
    left: 149px;
    top: 3px;
    width: 7px;
    height: 7px;
    border-left: 1px solid #999;
    border-top: 1px solid #999;
    transform: rotate(45deg);
}

.col {
    height: 100%;
    padding-left: 6px;
    display: flex;
    align-items: center;
    flex: none;
}

.od-list-head .col {
    border-right: 1px solid #e5e5e5;
}

.col-name {
    width: 270px;
    padding-left: 3px;
}

.col-date {
    width: 150px;
}

.col-type {
    width: 126px;
}

.col-size {
    width: 84px;
}

.od-file {
    display: flex;
    height: 23px;
    margin: 6px 0 0 0;
    width: 625px;
    background: #cce8ff;
    border: 1px solid #99d1ff;
    color: #6d6d6d;
    font-size: 11px;
}

.od-file .col-name {
    width: 269px;
    padding-left: 5px;
}

.od-file .size-value {
    width: 79px;
    justify-content: flex-end;
}

.file-name {
    gap: 6px;
    color: #1a1a1a;
    font-size: 11.500px;
}

.od-bottom {
    height: 79px;
    flex: none;
    background: #f0f0f0;
    position: relative;
    padding-top: 10px;
}

.od-file-row {
    display: flex;
    align-items: center;
    height: 24px;
}

.od-label {
    width: 197px;
    padding-left: 136px;
    white-space: nowrap;
    flex: none;
}

.od-input {
    width: 434px;
    height: 24px;
    flex: none;
    background: #fff;
    border: 1px solid #7a7a7a;
    display: flex;
    align-items: center;
    justify-content: space-between;
    padding: 0 5px 0 3px;
}

.od-filter {
    width: 196px;
    height: 24px;
    flex: none;
    margin-left: 13px;
    background: #e1e1e1;
    border: 1px solid #adadad;
    display: flex;
    align-items: center;
    justify-content: space-between;
    padding: 0 4px 0 3px;
    font-family: 'Noto Sans CJK SC', sans-serif;
    font-size: 13.500px;
}

.od-button-row {
    display: flex;
    gap: 14px;
    margin-top: 7px;
    padding-left: 645px;
}

.od-btn {
    width: 90px;
    height: 25px;
    background: #e1e1e1;
    border: 2px solid #adadad;
    font-family: inherit;
    font-size: 11.500px;
    color: #1a1a1a;
}

.od-btn.primary {
    border-color: #0078d7;
}

.resize-grip {
    position: absolute;
    right: 2px;
    bottom: 2px;
    width: 9px;
    height: 9px;
    background: radial-gradient(circle, #aaa 0 1px, transparent 1.100px) 0 0 / 3px 3px;
    clip-path: polygon(100% 0, 100% 100%, 0 100%);
}

.red-arrow {
    position: absolute;
    left: 300px;
    top: 167px;
    overflow: visible;
}

.red-note {
    position: absolute;
    left: 1px;
    top: 244px;
    font-family: 'Liberation Sans', Arial, sans-serif;
    font-size: 37.400px;
    line-height: 42px;
    color: #ff0000;
    white-space: nowrap;
}
```
